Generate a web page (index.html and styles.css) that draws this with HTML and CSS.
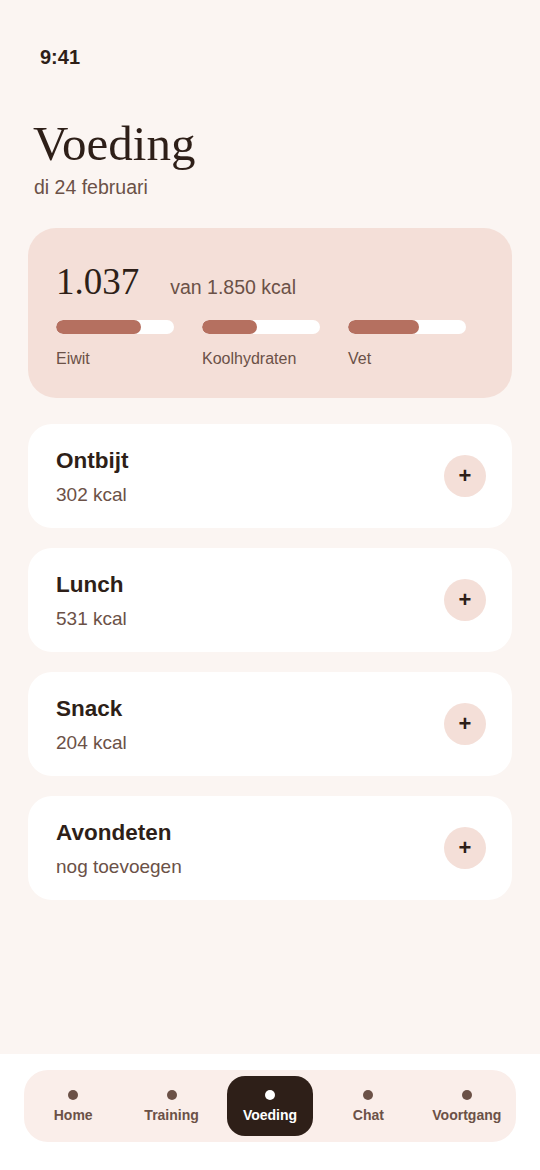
FILE: index.html
```html
<!DOCTYPE html>
<html lang="nl">

<head>
    <meta charset="UTF-8">
    <meta name="viewport" content="width=device-width, initial-scale=1.0">
    <title>Voeding</title>
    <link rel="stylesheet" href="styles.css">
</head>

<body>
    <div class="screen">
        <div class="status">9:41</div>

        <header class="page_head">
            <h1 class="title">Voeding</h1>
            <p class="date">di 24 februari</p>
        </header>

        <section class="summary">
            <div class="total">
                <span class="total_num">1.037</span>
                <span class="total_of">van 1.850 kcal</span>
            </div>
            <div class="macros">
                <div class="macro">
                    <div class="bar"><div class="fill" style="width: 72%"></div></div>
                    <span class="macro_name">Eiwit</span>
                </div>
                <div class="macro">
                    <div class="bar"><div class="fill" style="width: 47%"></div></div>
                    <span class="macro_name">Koolhydraten</span>
                </div>
                <div class="macro">
                    <div class="bar"><div class="fill" style="width: 60%"></div></div>
                    <span class="macro_name">Vet</span>
                </div>
            </div>
        </section>

        <!-- meals of the day -->
        <section class="meals">
            <div class="meal">
                <div class="meal_text">
                    <h2 class="meal_name">Ontbijt</h2>
                    <p class="meal_kcal">302 kcal</p>
                </div>
                <button class="add_btn">+</button>
            </div>
            <div class="meal">
                <div class="meal_text">
                    <h2 class="meal_name">Lunch</h2>
                    <p class="meal_kcal">531 kcal</p>
                </div>
                <button class="add_btn">+</button>
            </div>
            <div class="meal">
                <div class="meal_text">
                    <h2 class="meal_name">Snack</h2>
                    <p class="meal_kcal">204 kcal</p>
                </div>
                <button class="add_btn">+</button>
            </div>
            <div class="meal">
                <div class="meal_text">
                    <h2 class="meal_name">Avondeten</h2>
                    <p class="meal_kcal">nog toevoegen</p>
                </div>
                <button class="add_btn">+</button>
            </div>
        </section>

        <nav class="tabbar">
            <div class="tabs">
                <div class="tab"><span class="dot"></span><span>Home</span></div>
                <div class="tab"><span class="dot"></span><span>Training</span></div>
                <div class="tab active"><span class="dot"></span><span>Voeding</span></div>
                <div class="tab"><span class="dot"></span><span>Chat</span></div>
                <div class="tab"><span class="dot"></span><span>Voortgang</span></div>
            </div>
        </nav>
    </div>
</body>

</html>
```

FILE: styles.css
```css
* {
    box-sizing: border-box;
}

body {
    margin: 0;
    background: #fbf5f2;
    font-family: "Liberation Sans", Arial, sans-serif;
    color: #2e1f18;
}

.screen {
    width: 540px;
    height: 1170px;
    display: flex;
    flex-direction: column;
}

.status {
    padding: 46px 0 0 40px;
    height: 68px;
    font-size: 20px;
    font-weight: bold;
    line-height: 22px;
}

.page_head {
    padding: 49px 33px 0 33px;
}

.title {
    margin: 0;
    font-family: "Liberation Serif", "Times New Roman", serif;
    font-weight: normal;
    font-size: 49px;
    line-height: 54px;
}

.date {
    margin: 4px 0 0 1px;
    font-size: 19.5px;
    line-height: 24px;
    color: #6b5147;
}

.summary {
    margin: 29px 28px 0 28px;
    padding: 34px 28px 28px 28px;
    height: 170px;
    background: #f4dfd8;
    border-radius: 28px;
}

.total {
    display: flex;
    align-items: baseline;
    gap: 31px;
}

.total_num {
    font-family: "Liberation Serif", "Times New Roman", serif;
    font-size: 37px;
    line-height: 40px;
}

.total_of {
    font-size: 19.5px;
    color: #6b5147;
}

.macros {
    margin-top: 18px;
    display: flex;
    gap: 28px;
}

.macro {
    width: 118px;
    display: flex;
    flex-direction: column;
    gap: 15px;
}

.bar {
    height: 14px;
    border-radius: 7px;
    background: #ffffff;
    overflow: hidden;
}

.fill {
    height: 100%;
    border-radius: 7px;
    background: #b57060;
}

.macro_name {
    font-size: 16px;
    line-height: 19px;
    color: #6b5147;
    white-space: nowrap;
}

.meals {
    margin: 26px 28px 0 28px;
    display: flex;
    flex-direction: column;
    gap: 20px;
}

.meal {
    height: 104px;
    background: #ffffff;
    border-radius: 24px;
    padding: 2px 26px 0 28px;
    display: flex;
    align-items: center;
    justify-content: space-between;
}

.meal_name {
    margin: 0;
    font-size: 22.5px;
    line-height: 26px;
    font-weight: bold;
}

.meal_kcal {
    margin: 10px 0 0 0;
    font-size: 19px;
    line-height: 22px;
    color: #6b5147;
}

.add_btn {
    width: 42px;
    height: 42px;
    margin-top: -2px;
    border: none;
    border-radius: 50%;
    background: #f4dfd8;
    color: #2e1f18;
    font-family: "Liberation Sans", Arial, sans-serif;
    font-size: 22px;
    font-weight: bold;
    line-height: 42px;
    padding: 0;
}

.tabbar {
    margin-top: auto;
    height: 116px;
    background: #ffffff;
    padding: 16px 24px 0 24px;
}

.tabs {
    height: 72px;
    background: #faeeea;
    border-radius: 24px;
    display: grid;
    grid-template-columns: repeat(5, 1fr);
}

.tab {
    margin: 6px;
    border-radius: 18px;
    display: flex;
    flex-direction: column;
    align-items: center;
    justify-content: center;
    gap: 7px;
    font-size: 14px;
    font-weight: bold;
    color: #6b5147;
    padding-top: 1px;
}

.dot {
    width: 10px;
    height: 10px;
    border-radius: 50%;
    background: #6b5147;
}

.tab.active {
    background: #2e1f18;
    color: #ffffff;
}

.tab.active .dot {
    background: #ffffff;
}
```
